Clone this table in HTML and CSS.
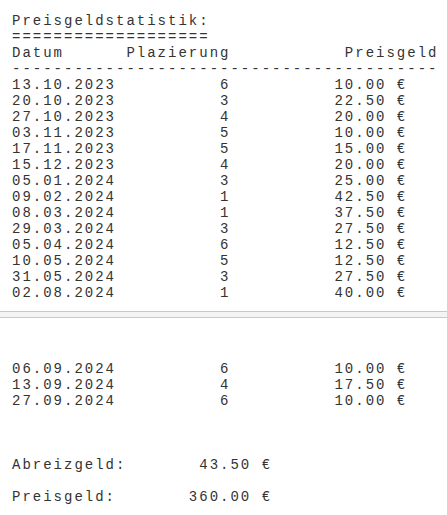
FILE: index.html
```html
<!DOCTYPE html>
<html lang="de">
<head>
<meta charset="utf-8">
<title>Preisgeldstatistik</title>
<link rel="stylesheet" href="styles.css">
</head>
<body>
<main class="sheet">
<pre class="block block-top">Preisgeldstatistik:
===================
Datum      Plazierung           Preisgeld
-----------------------------------------
13.10.2023          6          10.00 €
20.10.2023          3          22.50 €
27.10.2023          4          20.00 €
03.11.2023          5          10.00 €
17.11.2023          5          15.00 €
15.12.2023          4          20.00 €
05.01.2024          3          25.00 €
09.02.2024          1          42.50 €
08.03.2024          1          37.50 €
29.03.2024          3          27.50 €
05.04.2024          6          12.50 €
10.05.2024          5          12.50 €
31.05.2024          3          27.50 €
02.08.2024          1          40.00 €</pre>
<div class="divider"></div>
<pre class="block block-bottom">06.09.2024          6          10.00 €
13.09.2024          4          17.50 €
27.09.2024          6          10.00 €



Abreizgeld:       43.50 €

Preisgeld:       360.00 €</pre>
</main>
</body>
</html>
```
FILE: styles.css
```css
html, body {
  margin: 0;
  padding: 0;
  background: #ffffff;
}

.sheet {
  display: flex;
  flex-direction: column;
}

.block {
  margin: 0;
  padding-left: 12px;
  font-family: "Liberation Mono", "Courier New", monospace;
  font-size: 14px;
  line-height: 16px;
  letter-spacing: 2px;
  color: #333333;
  white-space: pre;
}

.block-top {
  padding-top: 13px;
}

.divider {
  margin-top: 10px;
  height: 5px;
  border-top: 1px solid #c8c8c8;
  border-bottom: 1px solid #c8c8c8;
  background: #f4f4f4;
}

.block-bottom {
  padding-top: 43px;
}
```
